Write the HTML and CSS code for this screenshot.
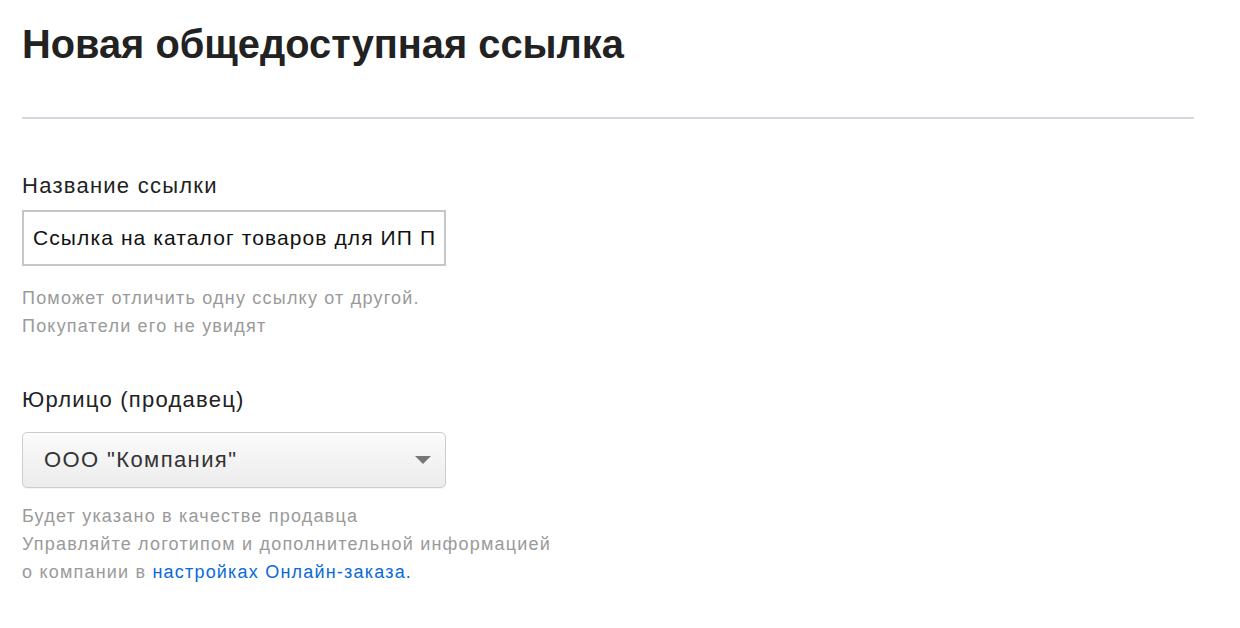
FILE: index.html
```html
<!DOCTYPE html>
<html lang="ru">
<head>
<meta charset="utf-8">
<title>Новая общедоступная ссылка</title>
<link rel="stylesheet" href="styles.css">
</head>
<body>
<div class="page">
  <h1 class="title">Новая общедоступная ссылка</h1>
  <div class="divider"></div>

  <div class="field field-name">
    <label class="label" for="name">Название ссылки</label>
    <input class="text-input" id="name" type="text" value="Ссылка на каталог товаров для ИП П">
    <div class="hint">
      <div>Поможет отличить одну ссылку от другой.</div>
      <div>Покупатели его не увидят</div>
    </div>
  </div>

  <div class="field field-seller">
    <div class="label">Юрлицо (продавец)</div>
    <div class="select">
      <span class="select-value">ООО "Компания"</span>
      <svg class="select-arrow" width="16" height="8" viewBox="0 0 16 8"><path d="M0 0H16L8 8Z" fill="#777"/></svg>
    </div>
    <div class="hint">
      <div>Будет указано в качестве продавца</div>
      <div>Управляйте логотипом и дополнительной информацией</div>
      <div>о компании в <a class="link" href="#">настройках Онлайн-заказа.</a></div>
    </div>
  </div>
</div>
</body>
</html>
```

FILE: styles.css
```css
html, body {
  margin: 0;
  padding: 0;
  background: #ffffff;
}
body {
  font-family: "Liberation Sans", Arial, sans-serif;
  color: #222222;
}
.page {
  width: 1172px;
  padding: 20px 0 0 22px;
}
.title {
  margin: 0;
  font-size: 39.8px;
  line-height: 48px;
  font-weight: 700;
  color: #222222;
}
.divider {
  height: 2px;
  background: #d5d7e0;
  margin-top: 49px;
}
.field {
  display: flex;
  flex-direction: column;
  align-items: flex-start;
}
.field-name {
  margin-top: 55px;
}
.field-seller {
  margin-top: 48px;
}
.label {
  font-size: 22px;
  line-height: 24px;
  letter-spacing: 1.25px;
  color: #222222;
}
.text-input {
  box-sizing: border-box;
  width: 424px;
  height: 56px;
  margin-top: 12px;
  padding: 0 4px 0 9px;
  border: 2px solid #c6c6c6;
  border-radius: 0;
  font-family: "Liberation Sans", Arial, sans-serif;
  font-size: 21px;
  letter-spacing: 1.1px;
  color: #111111;
  outline: none;
}
.hint {
  margin-top: 18px;
  font-size: 18px;
  line-height: 28px;
  letter-spacing: 1.2px;
  color: #9a9a9a;
}
.select {
  box-sizing: border-box;
  width: 424px;
  height: 56px;
  margin-top: 20px;
  display: flex;
  align-items: center;
  justify-content: space-between;
  padding: 0 14px 0 21px;
  border: 1px solid #cdcdcd;
  border-radius: 5px;
  background: linear-gradient(#fbfbfb, #ececec);
  box-shadow: 0 1px 0 rgba(0,0,0,0.04);
}
.select-value {
  font-size: 22px;
  letter-spacing: 1.4px;
  color: #333333;
}
.select-arrow {
  display: block;
}
.field-seller .hint {
  margin-top: 14px;
}
.link {
  color: #0a6ad8;
  text-decoration: none;
}
```
